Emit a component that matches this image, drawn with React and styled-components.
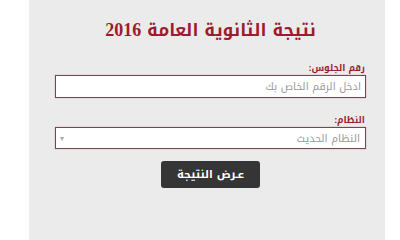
import React from "react";
import styled, { createGlobalStyle } from "styled-components";

const GlobalStyle = createGlobalStyle`
    html, body {
        margin: 0;
        padding: 0;
        background: #ffffff;
    }
`

function App() {
    return (
        <>
            <GlobalStyle />
            <Panel dir="rtl">
                <Title>نتيجة الثانوية العامة <Year>2016</Year></Title>
                <Form onSubmit={(e) => e.preventDefault()}>
                    <FieldContainer>
                        <Label htmlFor="seat">رقم الجلوس:</Label>
                        <Input id="seat" type="text" placeholder="ادخل الرقم الخاص بك" />
                    </FieldContainer>
                    <FieldContainer>
                        <Label htmlFor="system">النظام:</Label>
                        <SelectBox>
                            <SelectText>النظام الحديث</SelectText>
                            <Arrow>▾</Arrow>
                        </SelectBox>
                    </FieldContainer>
                    <ButtonRow>
                        <Button type="submit">عـرض النتيجة</Button>
                    </ButtonRow>
                </Form>
            </Panel>
        </>
    )
}

const Panel = styled.div`
    box-sizing: border-box;
    margin-left: 29px;
    width: 356px;
    height: 210px;
    min-height: 100vh;
    background: #ebebeb;
    padding: 17px 19px 0 26px;
    font-family: "Noto Kufi Arabic", "DejaVu Sans", sans-serif;
`

const Title = styled.h1`
    margin: 0;
    text-align: center;
    font-family: "Noto Kufi Arabic", serif;
    font-size: 17.3px;
    font-weight: 700;
    line-height: 26px;
    color: #9b1c2e;
`

const Year = styled.span`
    font-family: "Liberation Serif", serif;
    font-size: 18px;
`

const Form = styled.form`
    display: flex;
    flex-direction: column;
    margin-top: 17px;
`

const FieldContainer = styled.div`
    display: flex;
    flex-direction: column;
    margin-bottom: 15px;
`

const Label = styled.label`
    display: block;
    font-size: 9px;
    font-weight: 700;
    line-height: 14px;
    color: #9b1c2e;
    margin-bottom: 0;
    padding-right: 1px;
`

const Input = styled.input`
    box-sizing: border-box;
    width: 311px;
    height: 23px;
    margin: 0;
    padding: 0 4px;
    border: 1px solid #6e4a51;
    box-shadow: 0 0 1px rgba(160, 40, 60, 0.5);
    background: #ffffff;
    font-family: "Noto Kufi Arabic", sans-serif;
    font-size: 10.5px;
    direction: rtl;
    outline: none;

    &::placeholder {
        color: #9a9a9a;
    }
`

const SelectBox = styled.div`
    box-sizing: border-box;
    width: 311px;
    height: 22px;
    display: flex;
    align-items: center;
    justify-content: space-between;
    padding: 0 5px 0 4px;
    border: 1px solid #6e4a51;
    box-shadow: 0 0 1px rgba(160, 40, 60, 0.5);
    background: #ffffff;
`

const SelectText = styled.span`
    font-size: 10.5px;
    color: #9a9a9a;
`

const Arrow = styled.span`
    font-family: "DejaVu Sans", sans-serif;
    font-size: 8px;
    color: #aaaaaa;
`

const ButtonRow = styled.div`
    display: flex;
    justify-content: center;
    margin-top: -3px;
`

const Button = styled.button`
    width: 99px;
    height: 27px;
    border: none;
    border-radius: 3px;
    background: #353535;
    color: #ffffff;
    font-family: "Noto Kufi Arabic", sans-serif;
    font-size: 11px;
    font-weight: 700;
    cursor: pointer;
`

export default App
